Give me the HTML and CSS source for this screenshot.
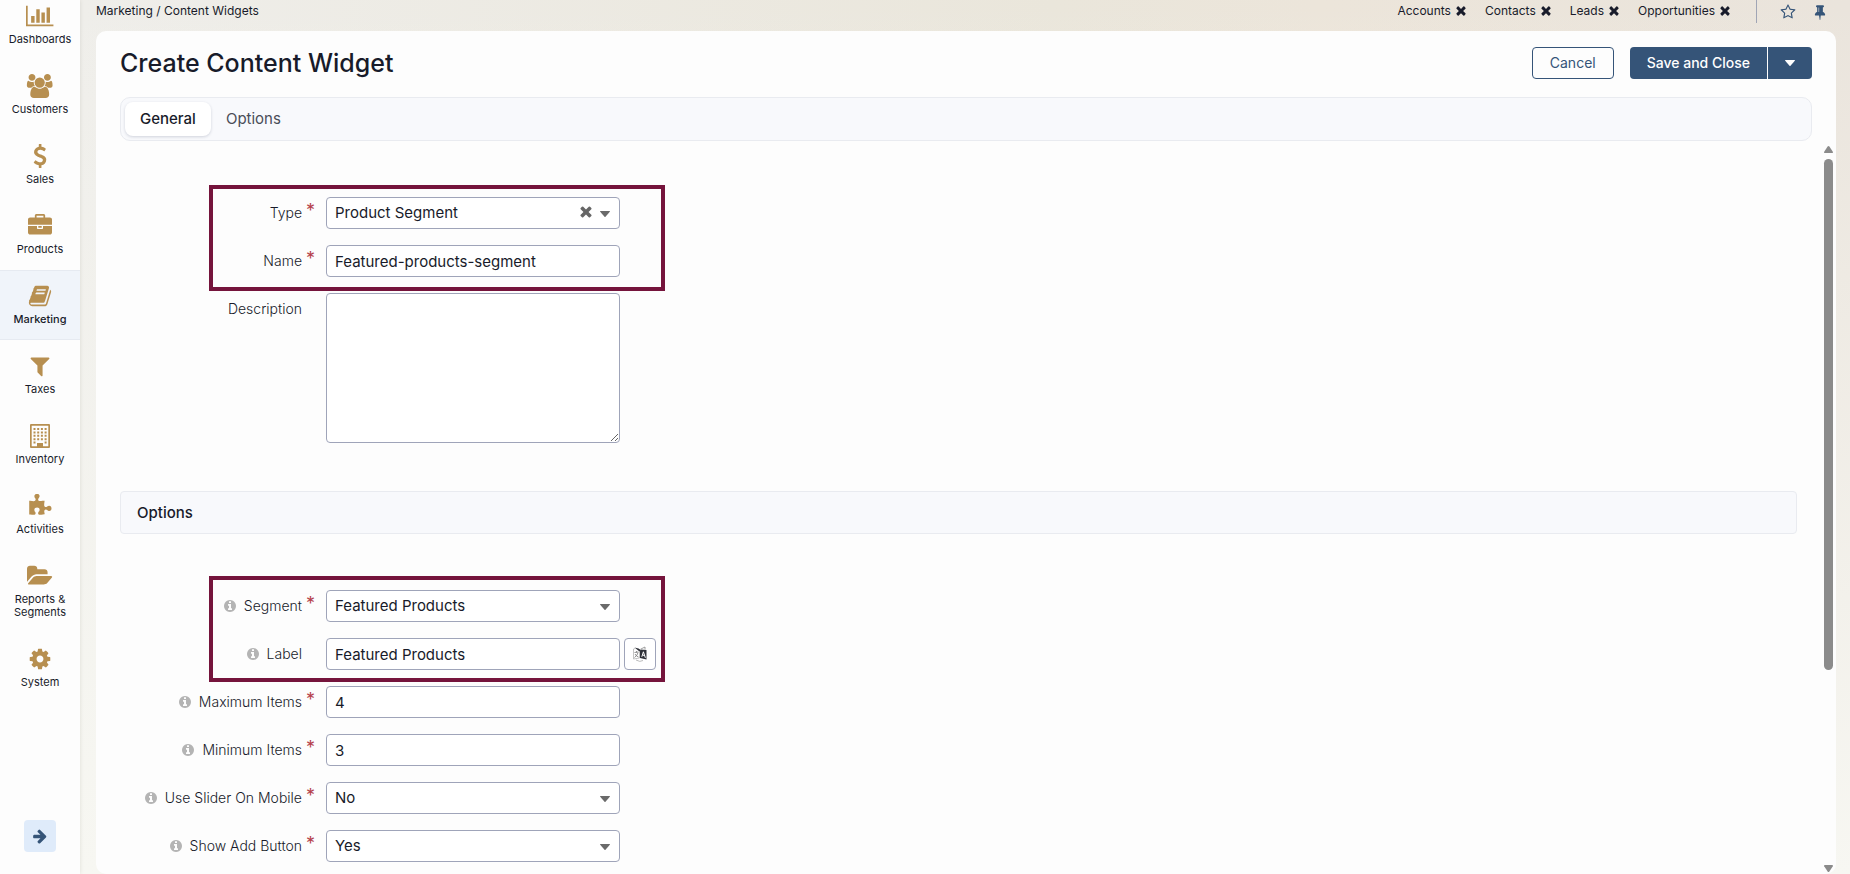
FILE: index.html
```html
<!DOCTYPE html>
<html lang="en">
<head>
<meta charset="utf-8">
<meta name="viewport" content="width=device-width, initial-scale=1">
<title>Create Content Widget</title>
<link rel="stylesheet" href="styles.css">
</head>
<body>
<svg class="sprite" aria-hidden="true">
  <symbol id="times" viewBox="256 384 1280 1280"><path transform="translate(0 64)" d="M1490 1322q0 40-28 68l-136 136q-28 28-68 28t-68-28l-294-294-294 294q-28 28-68 28t-68-28l-136-136q-28-28-28-68t28-68l294-294-294-294q-28-28-28-68t28-68l136-136q28-28 68-28t68 28l294 294 294-294q28-28 68-28t68 28l136 136q28 28 28 68t-28 68l-294 294 294 294q28 28 28 68z"/></symbol>
  <symbol id="info" viewBox="128 128 1536 1536"><path d="M1152 1376v-160q0-14-9-23t-23-9h-96v-512q0-14-9-23t-23-9h-320q-14 0-23 9t-9 23v160q0 14 9 23t23 9h96v320h-96q-14 0-23 9t-9 23v160q0 14 9 23t23 9h448q14 0 23-9t9-23zm-128-896v-160q0-14-9-23t-23-9h-192q-14 0-23 9t-9 23v160q0 14 9 23t23 9h192q14 0 23-9t9-23zm640 416q0 209-103 385.5t-279.5 279.5-385.5 103-385.5-103-279.5-279.5-103-385.5 103-385.5 279.5-279.5 385.5-103 385.5 103 279.5 279.5 103 385.5z"/></symbol>
  <symbol id="caret" viewBox="0 0 10 6"><path d="M.4 0h9.2q.6.3.2.8L5.500 5.700q-.5.400-1 0L.2.800Q-.2.300.4 0z"/></symbol>
</svg>
<div class="app">
  <aside class="sidebar">
    <nav class="menu" aria-label="Main">
      <a class="menu-item" href="#"><svg class="menu-icon" viewBox="0 0 2048 1792"><path d="M640 896v512h-256v-512h256zm384-512v1024h-256v-1024h256zm1024 1152v128h-2048v-1536h128v1408h1920zm-640-896v768h-256v-768h256zm384-384v1152h-256v-1152h256z"/></svg><span>Dashboards</span></a>
      <a class="menu-item" href="#"><svg class="menu-icon" viewBox="0 0 2048 1792"><path d="M657 896q-162 5-265 128h-134q-82 0-138-40.5t-56-118.500q0-353 124-353 6 0 43.500 21t97.500 42.500 119 21.500q67 0 133-23-5 37-5 66 0 139 81 256zm1071 637q0 120-73 189.500t-194 69.500h-874q-121 0-194-69.500t-73-189.500q0-53 3.500-103.500t14-109 26.500-108.500 43-97.500 62-81 85.500-53.500 111.500-20q10 0 43 21.500t73 48 107 48 135 21.500 135-21.500 107-48 73-48 43-21.500q61 0 111.500 20t85.500 53.500 62 81 43 97.500 26.500 108.500 14 109 3.500 103.500zm-1024-1277q0 106-75 181t-181 75-181-75-75-181 75-181 181-75 181 75 75 181zm704 384q0 159-112.500 271.500t-271.500 112.500-271.500-112.500-112.500-271.500 112.500-271.500 271.500-112.500 271.500 112.500 112.500 271.500zm576 225q0 78-56 118.500t-138 40.500h-134q-103-123-265-128 81-117 81-256 0-29-5-66 66 23 133 23 59 0 119-21.500t97.500-42.500 43.500-21q124 0 124 353zm-128-609q0 106-75 181t-181 75-181-75-75-181 75-181 181-75 181 75 75 181z"/></svg><span>Customers</span></a>
      <a class="menu-item" href="#"><svg class="menu-icon" viewBox="0 0 1792 1792"><path d="M1362 1185q0 153-99.500 263.500t-258.500 136.500v175q0 14-9 23t-23 9h-135q-13 0-22.500-9.500t-9.500-22.500v-175q-66-9-127.500-31t-101.500-44.500-74-48-46.500-37.500-17.500-18q-17-21-2-41l103-135q7-10 23-12 15-2 24 9l2 2q113 99 243 125 37 8 74 8 81 0 142.500-43t61.500-122q0-28-15-53t-33.500-42-58.500-37.500-66-32-80-32.500q-39-16-61.500-25t-61.500-26.500-62.500-31-56.500-35.500-53.500-42.500-43.500-49-35.500-58-21-66.500-8.500-78q0-138 98-242t255-134v-180q0-13 9.500-22.500t22.500-9.500h135q14 0 23 9t9 23v176q57 6 110.500 23t87 33.500 63.500 37.500 39 29 15 14q17 18 5 38l-81 146q-8 15-23 16-14 3-27-7-3-3-14.500-12t-39-26.500-58.500-32-74.500-26-85.500-11.500q-95 0-155 43t-60 111q0 26 8.500 48t29.500 41.500 39.500 33 56 31 60.500 27 70 27.500q53 20 81 31.500t76 35 75.500 42.500 62 50 53 63.500 31.500 76.500 13 94z"/></svg><span>Sales</span></a>
      <a class="menu-item" href="#"><svg class="menu-icon" viewBox="0 0 1792 1792"><path d="M640 256h512v-128h-512v128zm1152 640v480q0 66-47 113t-113 47h-1472q-66 0-113-47t-47-113v-480h672v160q0 26 19 45t45 19h320q26 0 45-19t19-45v-160h672zm-768 0v128h-256v-128h256zm768-480v384h-1792v-384q0-66 47-113t113-47h352v-160q0-40 28-68t68-28h576q40 0 68 28t28 68v160h352q66 0 113 47t47 113z"/></svg><span>Products</span></a>
      <a class="menu-item is-active" href="#" aria-current="page"><svg class="menu-icon" viewBox="0 0 1792 1792"><path d="M1703 478q40 57 18 129l-275 906q-19 64-76.500 107.500t-122.500 43.500h-923q-77 0-148.500-53.500t-99.500-131.500q-24-67-2-127 0-4 3-27t4-37q1-8-3-21.500t-3-19.500q2-11 8-21t16.500-23.500 16.500-23.500q23-38 45-91.500t30-91.500q3-10 .5-30t-.5-28q3-11 17-28t17-23q21-36 42-92t25-90q1-9-2.500-32t.5-28q4-13 22-30.500t22-22.500q19-26 42.500-84.500t27.500-96.500q1-8-3-25.500t-2-26.500q2-8 9-18t18-23 17-21q8-12 16.500-30.500t15-35 16-36 19.500-32 26.500-23.500 36-11.500 47.500 5.500l-1 3q38-9 51-9h761q74 0 114 56t18 130l-274 906q-36 119-71.500 153.500t-128.500 34.500h-869q-27 0-38 15-11 16-1 43 24 70 144 70h923q29 0 56-15.500t35-41.500l300-987q7-22 5-57 38 15 59 43zm-1064 2q-4 13 2 22.500t20 9.500h608q13 0 25.500-9.500t16.500-22.500l21-64q4-13-2-22.500t-20-9.500h-608q-13 0-25.500 9.500t-16.500 22.500zm-83 256q-4 13 2 22.500t20 9.500h608q13 0 25.500-9.500t16.500-22.500l21-64q4-13-2-22.500t-20-9.500h-608q-13 0-25.500 9.500t-16.500 22.500z"/></svg><span>Marketing</span></a>
      <a class="menu-item" href="#"><svg class="menu-icon" viewBox="0 0 1792 1792"><path d="M1595 295q17 41-14 70l-493 493v742q0 42-39 59-13 5-25 5-27 0-45-19l-256-256q-19-19-19-45v-486l-493-493q-31-29-14-70 17-39 59-39h1280q42 0 59 39z"/></svg><span>Taxes</span></a>
      <a class="menu-item" href="#"><svg class="menu-icon" viewBox="0 0 24 24"><path fill-rule="evenodd" d="M3 0h18q1 0 1 1v22q0 1-1 1H3q-1 0-1-1V1q0-1 1-1zm.7 1.700v20.600h5.300V19h6v3.300h5.300V1.700z"/><path d="M5.500 4h2v2h-2zm3.700 0h2v2h-2zm3.700 0h2v2h-2zm3.700 0h2v2h-2zM5.500 7.400h2v2h-2zm3.700 0h2v2h-2zm3.700 0h2v2h-2zm3.700 0h2v2h-2zM5.500 10.800h2v2h-2zm3.700 0h2v2h-2zm3.700 0h2v2h-2zm3.700 0h2v2h-2zM5.500 14.200h2v2h-2zm3.700 0h2v2h-2zm3.700 0h2v2h-2zm3.700 0h2v2h-2zM5.500 17.600h2v2h-2zm11.100 0h2v2h-2z"/></svg><span>Inventory</span></a>
      <a class="menu-item" href="#"><svg class="menu-icon" viewBox="0 0 1792 1792"><path d="M1755 1083q0 81-44.500 135t-123.500 54q-41 0-77.500-17.500t-59-38-56.500-38-71-17.500q-110 0-110 124 0 39 16 115t15 115v5q-22 0-33 1-34 3-97.500 11.500t-115.500 13.500-98 5q-61 0-103-26.500t-42-83.500q0-37 17.500-71t38-56.500 38-59 17.500-77.500q0-79-54-123.500t-135-44.500q-84 0-143 45.500t-59 127.500q0 43 15 83t33.500 64.500 33.500 53 15 50.500q0 45-46 89-37 35-117 35-95 0-245-24-9-2-27.500-4t-27.500-4l-13-2q-1 0-3-1-2 0-2-1v-1024q2 1 17.500 3.500t34 5 21.500 3.500q150 24 245 24 80 0 117-35 46-44 46-89 0-22-15-50.500t-33.500-53-33.500-64.500-15-83q0-82 59-127.500t144-45.500q80 0 134 44.500t54 123.500q0 41-17.500 77.500t-38 59-38 56.500-17.500 71q0 57 42 83.500t103 26.500q64 0 180-15t163-17v2q-1 2-3.500 17.500t-5 34-3.500 21.500q-24 150-24 245 0 80 35 117 44 46 89 46 22 0 50.500-15t53-33.500 64.500-33.500 83-15q82 0 127.500 59t45.500 143z"/></svg><span>Activities</span></a>
      <a class="menu-item" href="#"><svg class="menu-icon" viewBox="0 0 1920 1792"><path d="M1879 952q0 31-31 66l-336 396q-43 51-120.500 86.500t-143.500 35.500h-1088q-34 0-60.500-13t-26.500-43q0-31 31-66l336-396q43-51 120.500-86.500t143.500-35.500h1088q34 0 60.500 13t26.500 43zm-343-344v160h-832q-94 0-197 47.500t-164 119.500l-337 396-5 6q0-4-.5-12.500t-.5-12.500v-960q0-92 66-158t158-66h320q92 0 158 66t66 158v32h544q92 0 158 66t66 158z"/></svg><span>Reports &amp;<br>Segments</span></a>
      <a class="menu-item" href="#"><svg class="menu-icon" viewBox="0 0 1792 1792"><path d="M1152 896q0-106-75-181t-181-75-181 75-75 181 75 181 181 75 181-75 75-181zm512-109v222q0 12-8 23t-20 13l-185 28q-19 54-39 91 35 50 107 138 10 12 10 25t-9 23q-27 37-99 108t-94 71q-12 0-26-9l-138-108q-44 23-91 38-16 136-29 186-7 28-36 28h-222q-14 0-24.500-8.500t-11.500-21.500l-28-184q-49-16-90-37l-141 107q-10 9-25 9-14 0-25-11-126-114-165-168-7-10-7-23 0-12 8-23 15-21 51-66.500t54-70.500q-27-50-41-99l-183-27q-13-2-21-12.500t-8-23.500v-222q0-12 8-23t19-13l186-28q14-46 39-92-40-57-107-138-10-12-10-24 0-10 9-23 26-36 98.500-107.500t94.500-71.500q13 0 26 10l138 107q44-23 91-38 16-136 29-186 7-28 36-28h222q14 0 24.500 8.500t11.500 21.500l28 184q49 16 90 37l142-107q9-9 24-9 13 0 25 10 129 119 165 170 7 8 7 22 0 12-8 23-15 21-51 66.500t-54 70.500q26 50 41 98l183 28q13 2 21 12.500t8 23.500z"/></svg><span>System</span></a>
    </nav>
    <button class="expand" type="button" aria-label="Expand menu"><svg viewBox="0 0 1792 1792"><path d="M1600 960q0 54-37 91l-651 651q-39 37-91 37-51 0-90-37l-75-75q-38-38-38-91t38-91l293-293h-704q-52 0-84.500-37.500t-32.500-90.500v-128q0-53 32.500-90.500t84.500-37.500h704l-293-294q-38-36-38-90t38-90l75-75q38-38 90-38 53 0 91 38l651 651q37 35 37 90z"/></svg></button>
  </aside>

  <div class="main">
    <header class="topbar">
      <div class="breadcrumb">Marketing / Content Widgets</div>
      <div class="pins">
        <span class="pin"><a href="#">Accounts</a><button type="button" aria-label="Unpin Accounts"><svg><use href="#times"/></svg></button></span>
        <span class="pin"><a href="#">Contacts</a><button type="button" aria-label="Unpin Contacts"><svg><use href="#times"/></svg></button></span>
        <span class="pin"><a href="#">Leads</a><button type="button" aria-label="Unpin Leads"><svg><use href="#times"/></svg></button></span>
        <span class="pin"><a href="#">Opportunities</a><button type="button" aria-label="Unpin Opportunities"><svg><use href="#times"/></svg></button></span>
      </div>
      <div class="page-tools">
        <button type="button" aria-label="Add to favorites"><svg viewBox="0 0 1792 1792"><path d="M1201 1004l306-297-422-62-189-382-189 382-422 62 306 297-73 421 378-199 377 199zm527-357q0 22-26 48l-363 354 86 500q1 7 1 20 0 50-41 50-19 0-40-12l-449-236-449 236q-22 12-40 12-21 0-31.500-14.500t-10.500-35.500q0-6 2-20l86-500-364-354q-25-27-25-48 0-37 56-46l502-73 225-455q19-41 49-41t49 41l225 455 502 73q56 9 56 46z"/></svg></button>
        <button type="button" aria-label="Pin page"><svg viewBox="0 0 1792 1792"><path d="M800 864v-448q0-14-9-23t-23-9-23 9-9 23v448q0 14 9 23t23 9 23-9 9-23zm672 352q0 26-19 45t-45 19h-429l-51 483q-2 12-10.500 20.500t-20.500 8.500h-1q-27 0-32-27l-76-485h-404q-26 0-45-19t-19-45q0-123 78.500-221.500t177.500-98.500v-512q-52 0-90-38t-38-90 38-90 90-38h640q52 0 90 38t38 90-38 90-90 38v512q99 0 177.500 98.500t78.500 221.500z"/></svg></button>
      </div>
    </header>

    <main class="card">
      <div class="card-head">
        <h1>Create Content Widget</h1>
        <div class="actions">
          <button class="btn btn-outline" type="button">Cancel</button>
          <div class="btn-group">
            <button class="btn btn-primary" type="button">Save and Close</button>
            <button class="btn btn-primary" type="button" aria-label="More save options"><svg class="btn-caret"><use href="#caret"/></svg></button>
          </div>
        </div>
      </div>
      <div class="tabs" role="tablist">
        <button class="tab is-selected" type="button" role="tab" aria-selected="true">General</button>
        <button class="tab" type="button" role="tab" aria-selected="false">Options</button>
      </div>

      <div class="scroll">
        <form class="form">
          <div class="fields">
            <div class="group group-first">
              <div class="row">
                <div class="label"><label for="type">Type</label></div><span class="required">*</span>
                <div class="control"><select id="type"><option>Product Segment</option></select><button class="clear" type="button" aria-label="Clear type"><svg><use href="#times"/></svg></button><svg class="caret"><use href="#caret"/></svg></div>
              </div>
              <div class="row">
                <div class="label"><label for="name">Name</label></div><span class="required">*</span>
                <div class="control"><input id="name" type="text" value="Featured-products-segment"></div>
              </div>
            </div>
            <div class="row">
              <div class="label"><label for="description">Description</label></div><span class="required"></span>
              <div class="control"><textarea id="description"></textarea></div>
            </div>
          </div>

          <h2 class="section-title">Options</h2>

          <div class="fields">
            <div class="group group-second">
              <div class="row">
                <div class="label"><svg class="info"><use href="#info"/></svg><label for="segment">Segment</label></div><span class="required">*</span>
                <div class="control"><select id="segment"><option>Featured Products</option></select><svg class="caret"><use href="#caret"/></svg></div>
              </div>
              <div class="row">
                <div class="label"><svg class="info"><use href="#info"/></svg><label for="label">Label</label></div><span class="required"></span>
                <div class="control"><input id="label" type="text" value="Featured Products"></div>
                <button class="translate" type="button" aria-label="Translations"><svg viewBox="0 0 16 16"><path d="M1.500 3 3 2.500M1.500 3v10l6-1V5" fill="#fff" stroke="#aaa" stroke-width=".7"/><path d="M2.500 6.500 6.500 6M4.500 5v1.500M6 6.500Q5.500 9.500 2.500 11.500M3 8q1.500 2.500 3.500 3" fill="none" stroke="#777" stroke-width=".8"/><path d="M2.500 1.500 6.500 2.500 8 3.500V12l6.500 1.500V4L8.500 3.500 7.500 5.500z" fill="#2e3038"/><path d="M8.500 3.200 13 1v2.500" fill="none" stroke="#888" stroke-width=".8"/><path d="m9.800 10.800 1.600-5 2 6M10.400 9l2.200.5" fill="none" stroke="#fff"/><path d="M4 14q4 2.500 7 .5" fill="none" stroke="#aaa" stroke-width=".8"/></svg></button>
              </div>
            </div>
            <div class="row">
              <div class="label"><svg class="info"><use href="#info"/></svg><label for="max">Maximum Items</label></div><span class="required">*</span>
              <div class="control"><input id="max" type="text" value="4"></div>
            </div>
            <div class="row">
              <div class="label"><svg class="info"><use href="#info"/></svg><label for="min">Minimum Items</label></div><span class="required">*</span>
              <div class="control"><input id="min" type="text" value="3"></div>
            </div>
            <div class="row">
              <div class="label"><svg class="info"><use href="#info"/></svg><label for="slider">Use Slider On Mobile</label></div><span class="required">*</span>
              <div class="control"><select id="slider"><option>No</option><option>Yes</option></select><svg class="caret"><use href="#caret"/></svg></div>
            </div>
            <div class="row">
              <div class="label"><svg class="info"><use href="#info"/></svg><label for="add">Show Add Button</label></div><span class="required">*</span>
              <div class="control"><select id="add"><option>Yes</option><option>No</option></select><svg class="caret"><use href="#caret"/></svg></div>
            </div>
          </div>
        </form>
        <div class="scrollbar" aria-hidden="true">
          <svg viewBox="0 0 9 7"><path d="M4.500 0Q5 0 5.400.6L8.800 5.800Q9.200 7 8.200 7H.8Q-.2 7 .2 5.800L3.600.6Q4 0 4.500 0z"/></svg>
          <div class="track"><div class="thumb"></div></div>
          <svg viewBox="0 0 9 7"><path d="M4.500 7Q5 7 5.400 6.400L8.800 1.200Q9.200 0 8.200 0H.8Q-.2 0 .2 1.200L3.600 6.400Q4 7 4.500 7z"/></svg>
        </div>
      </div>
    </main>
  </div>
</div>
</body>
</html>
```
FILE: styles.css
```css
:root {
  --ink: #181b2a;
  --blue: #355478;
  --gold: #b78f50;
  --surface: #fdfdfd;
  --panel: #f8f9fc;
  --line: #e9ebf0;
  --field-line: #9fa4b9;
  --mark: #75143c;
}

*, ::before { box-sizing: border-box; }

body {
  margin: 0;
  font: 400 15px/20px Inter, "Liberation Sans", sans-serif;
  color: var(--ink);
}

button, input, select, textarea { font: inherit; color: inherit; }
button { padding: 0; border: 0; background: none; cursor: pointer; }
a { color: inherit; text-decoration: none; }
svg { display: block; fill: currentColor; }
.sprite { position: absolute; width: 0; height: 0; }

.app { display: flex; height: 100vh; overflow: hidden; }

/* Sidebar */
.sidebar {
  display: flex;
  flex: none;
  flex-direction: column;
  align-items: center;
  justify-content: space-between;
  width: 80px;
  padding-bottom: 22px;
  background: var(--surface);
  box-shadow: 0 0 4px rgba(60, 50, 30, .12);
  z-index: 1;
}
.menu { width: 100%; }
.menu-item {
  display: flex;
  flex-direction: column;
  align-items: center;
  gap: 5px;
  padding: 14px 4px;
  font-size: 11px;
  line-height: 13px;
  text-align: center;
}
.menu-item:first-child { padding-top: 4px; }
.menu-item.is-active {
  background: #f0f4fa;
  box-shadow: inset 0 1px #e6eaf1, inset 0 -1px #e6eaf1;
  font-weight: 500;
}
.menu-icon { height: 24px; color: var(--gold); }
.expand {
  display: grid;
  place-items: center;
  width: 32px;
  height: 32px;
  border-radius: 4px;
  background: #dfebfa;
  color: var(--blue);
}
.expand svg { width: 16px; height: 16px; }

/* Page frame */
.main {
  display: flex;
  flex: 1;
  flex-direction: column;
  min-width: 0;
  padding: 0 14px 0 16px;
  background:
    linear-gradient(to bottom, rgba(247, 247, 242, 0), #f7f7f2),
    linear-gradient(to right, #efeeea, #eae6db 55%, #ece5da 70%, #eae4dc);
}
.topbar {
  display: flex;
  align-items: flex-start;
  height: 31px;
  font-size: 12px;
  line-height: 22px;
}
.breadcrumb { flex: 1; }
.pins { display: flex; gap: 19px; padding-right: 26px; }
.pin { display: flex; align-items: center; gap: 5px; }
.pin svg { width: 10px; height: 10px; }
.page-tools {
  display: flex;
  align-items: center;
  gap: 16px;
  height: 23px;
  padding: 0 8px 0 23px;
  border-left: 1px solid #a0a5b5;
  color: var(--blue);
}
.page-tools svg { width: 16px; height: 16px; }

.card {
  display: flex;
  flex: 1;
  flex-direction: column;
  min-height: 0;
  border-radius: 10px;
  background: var(--surface);
}
.card-head {
  display: flex;
  align-items: center;
  justify-content: space-between;
  padding: 16px 24px 18px;
}
h1 { margin: 0; font-size: 25px; line-height: 32px; font-weight: 500; }
.actions { display: flex; gap: 16px; }
.btn { height: 32px; padding: 0 17px; border-radius: 4px; font-size: 14px; }
.btn-outline { border: 1px solid var(--blue); color: var(--blue); }
.btn-primary { background: var(--blue); color: #fff; font-weight: 500; }
.btn-group { display: flex; gap: 1px; }
.btn-group .btn:first-child { border-radius: 4px 0 0 4px; }
.btn-group .btn:last-child { border-radius: 0 4px 4px 0; }
.btn-caret { width: 10px; height: 6px; }

.tabs {
  display: flex;
  margin: 0 24px;
  padding: 4px;
  border: 1px solid var(--line);
  border-radius: 10px;
  background: var(--panel);
}
.tab { height: 34px; padding: 0 15px; border-radius: 8px; color: #4a4d58; }
.tab.is-selected {
  background: #fff;
  color: var(--ink);
  font-weight: 500;
  box-shadow: 0 1px 3px rgba(30, 40, 70, .18);
}

/* Form */
.scroll { display: flex; flex: 1; min-height: 0; }
.form { flex: 1; min-width: 0; overflow: hidden; padding: 56px 27px 0 24px; }
.fields, .group { display: grid; gap: 16px; }
.group { position: relative; }
.group::before {
  content: "";
  position: absolute;
  left: 89px;
  width: 456px;
  border: 4px solid var(--mark);
  pointer-events: none;
}
.group-first::before { top: -12px; bottom: -14px; }
.group-second::before { top: -14px; bottom: -12px; }
.row { display: grid; grid-template-columns: 182px 24px 294px 36px; }
.label {
  display: flex;
  align-items: center;
  justify-content: flex-end;
  gap: 8px;
  height: 32px;
  font-size: 14px;
  font-weight: 300;
  white-space: nowrap;
}
.info { width: 12px; height: 12px; color: #b4b4b4; }
.required { padding: 4px 0 0 4px; font-size: 18px; color: #b5424c; }
.control { position: relative; }
.control input, .control select, .control textarea {
  display: block;
  width: 100%;
  height: 32px;
  padding: 0 8px;
  border: 1px solid var(--field-line);
  border-radius: 4px;
  background: #fff;
}
.control select { appearance: none; }
.control textarea { height: 150px; resize: both; }
.caret { position: absolute; top: 14px; right: 10px; width: 10px; height: 6px; color: #6a6a6a; pointer-events: none; }
.clear { position: absolute; top: 9px; right: 28px; color: #666; }
.clear svg { width: 12px; height: 12px; }
.translate {
  display: grid;
  place-items: center;
  height: 32px;
  margin-left: 4px;
  width: 32px;
  border: 1px solid var(--field-line);
  border-radius: 4px;
  background: #fff;
}
.translate svg { width: 16px; height: 16px; }
.section-title {
  margin: 48px 0 56px;
  padding: 11px 16px 10px;
  border: 1px solid var(--line);
  border-radius: 4px;
  background: var(--panel);
  font-size: 15px;
  line-height: 20px;
  font-weight: 500;
}

.scrollbar {
  display: flex;
  flex: none;
  flex-direction: column;
  gap: 6px;
  width: 12px;
  padding: 5px 3px 2px 0;
  color: #8b8b8b;
}
.scrollbar > svg { width: 9px; height: 7px; }
.track { flex: 1; }
.thumb { height: 73%; border-radius: 5px; background: #8b8b8b; }
```
